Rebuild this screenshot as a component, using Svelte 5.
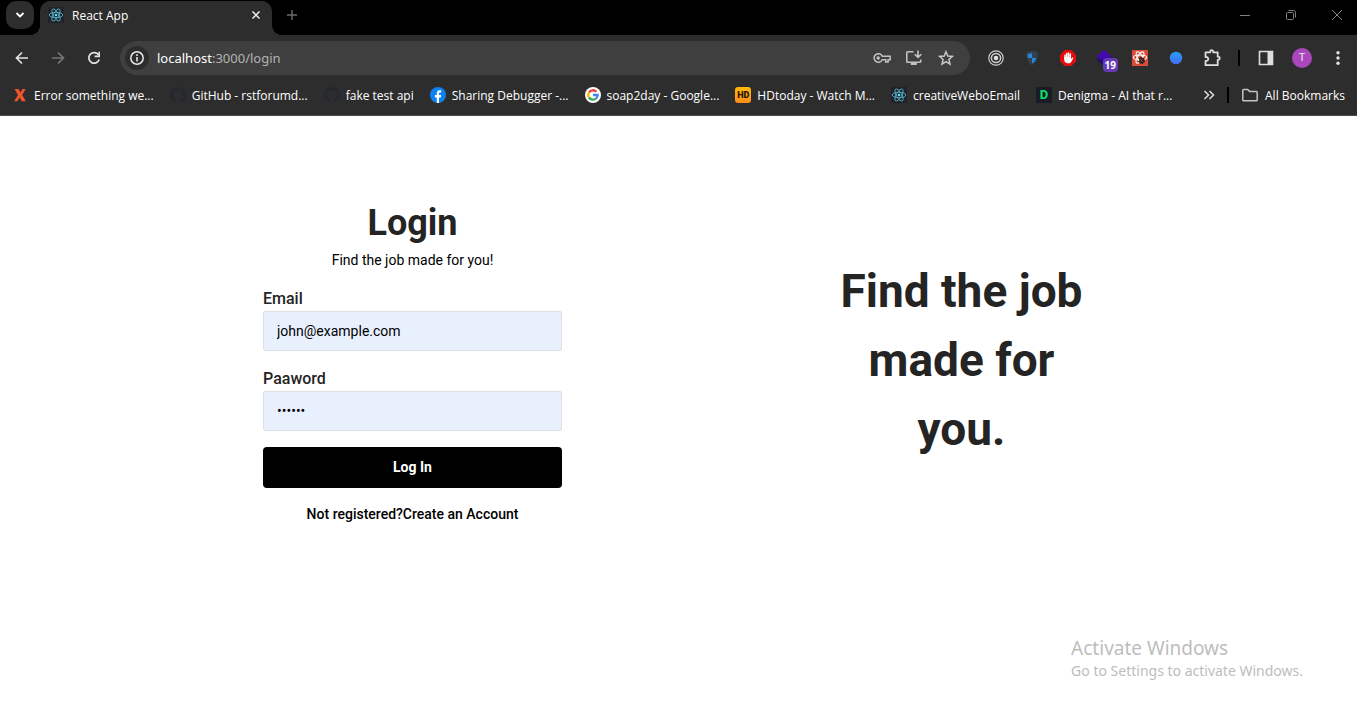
<script>
  let email = $state('john@example.com');
  let password = $state('secret');

  const bookmarks = [
    { icon: 'x', label: 'Error something we...' },
    { icon: 'github', label: 'GitHub - rstforumd...' },
    { icon: 'github', label: 'fake test api' },
    { icon: 'facebook', label: 'Sharing Debugger -...' },
    { icon: 'google', label: 'soap2day - Google...' },
    { icon: 'hd', label: 'HDtoday - Watch M...' },
    { icon: 'react', label: 'creativeWeboEmail' },
    { icon: 'denigma', label: 'Denigma - AI that r...' }
  ];
</script>

{#snippet reactLogo()}
  <svg width="16" height="16" viewBox="0 0 16 16" aria-hidden="true">
    <rect width="16" height="16" fill="#20232a" />
    <g fill="none" stroke="#58bcd6" stroke-width="0.8">
      <ellipse cx="8" cy="8" rx="6.8" ry="2.7" />
      <ellipse cx="8" cy="8" rx="6.8" ry="2.7" transform="rotate(60 8 8)" />
      <ellipse cx="8" cy="8" rx="6.8" ry="2.7" transform="rotate(120 8 8)" />
    </g>
    <circle cx="8" cy="8" r="1.3" fill="#61dafb" />
  </svg>
{/snippet}

{#snippet favicon(kind)}
  {#if kind === 'react'}
    {@render reactLogo()}
  {:else if kind === 'x'}
    <svg width="16" height="16" viewBox="0 0 16 16" aria-hidden="true">
      <path d="M2.500 2h4l2 3.600L10.400 2h3.200L10.200 8l3.600 6.200h-4L7.600 10.400 5.400 14.200H2.200L6 8z" fill="#f0562b" />
    </svg>
  {:else if kind === 'github'}
    <svg width="16" height="16" viewBox="0 0 16 16" aria-hidden="true">
      <path fill="#24292f" d="M8 0C3.580 0 0 3.580 0 8c0 3.540 2.290 6.530 5.470 7.590.4.070.55-.17.55-.38 0-.19-.01-.82-.01-1.490-2.010.37-2.530-.49-2.690-.94-.09-.23-.48-.94-.82-1.130-.28-.15-.68-.52-.01-.53.63-.01 1.080.58 1.230.82.72 1.210 1.870.87 2.330.66.070-.52.28-.87.51-1.070-1.780-.2-3.640-.89-3.640-3.950 0-.87.31-1.590.82-2.150-.08-.2-.36-1.020.08-2.120 0 0 .67-.21 2.200.82.64-.18 1.320-.27 2-.27s1.360.09 2 .27c1.530-1.040 2.200-.82 2.200-.82.44 1.100.16 1.920.08 2.120.51.56.82 1.270.82 2.150 0 3.070-1.870 3.750-3.650 3.950.29.25.54.73.54 1.480 0 1.070-.01 1.930-.01 2.200 0 .21.15.46.55.38A8.010 8.010 0 0 0 16 8c0-4.420-3.580-8-8-8z" />
    </svg>
  {:else if kind === 'facebook'}
    <svg width="16" height="16" viewBox="0 0 16 16" aria-hidden="true">
      <circle cx="8" cy="8" r="8" fill="#0c82f0" />
      <path d="M6.800 16v-5.500H4.900V8.100h1.900V6.400c0-2.200 1.100-3.200 2.900-3.200.6 0 1.100.1 1.500.2v2h-1c-.9 0-1.200.5-1.200 1.200v1.500h2.200l-.4 2.400H9V16z" fill="#fff" />
    </svg>
  {:else if kind === 'google'}
    <svg width="16" height="16" viewBox="0 0 16 16" aria-hidden="true">
      <circle cx="8" cy="8" r="8" fill="#fff" />
      <g fill="none" stroke-width="2.300">
        <path d="M4 5.500A4.700 4.700 0 0 1 11.400 4.700" stroke="#ea4335" />
        <path d="M4 5.500a4.700 4.700 0 0 0 0 5" stroke="#fbbc05" />
        <path d="M4 10.500a4.700 4.700 0 0 0 7 1" stroke="#34a853" />
        <path d="M11 11.500A4.700 4.700 0 0 0 12.700 8H8" stroke="#4285f4" />
      </g>
    </svg>
  {:else if kind === 'hd'}
    <span class="tile hd" aria-hidden="true">HD</span>
  {:else}
    <span class="tile denigma" aria-hidden="true">D</span>
  {/if}
{/snippet}

<div class="browser">
  <header class="chrome">
    <div class="tabs">
      <button class="tab-search" aria-label="Search tabs">
        <svg width="10" height="8" viewBox="0 0 10 8"><path d="M1.500 2 5 5.500 8.500 2" fill="none" stroke="#fff" stroke-width="1.800" /></svg>
      </button>
      <div class="tab">
        {@render reactLogo()}
        <span class="tab-title">React App</span>
        <button class="icon close" aria-label="Close tab">
          <svg width="10" height="10" viewBox="0 0 10 10"><path d="M1.500 1.500l7 7M8.500 1.500l-7 7" stroke="#eee" stroke-width="1.500" /></svg>
        </button>
      </div>
      <button class="icon new-tab" aria-label="New tab">
        <svg width="12" height="12" viewBox="0 0 12 12"><path d="M6 1v10M1 6h10" stroke="#6c6c6c" stroke-width="1.400" /></svg>
      </button>
      <div class="window-controls">
        <button class="icon" aria-label="Minimize"><svg width="10" height="10" viewBox="0 0 10 10"><path d="M0 5.500h10" stroke="#808080" /></svg></button>
        <button class="icon" aria-label="Restore"><svg width="10" height="10" viewBox="0 0 10 10"><rect x=".5" y="2.500" width="7" height="7" rx="1" fill="none" stroke="#808080" /><path d="M2.500.5h5a2 2 0 0 1 2 2v5" fill="none" stroke="#808080" /></svg></button>
        <button class="icon" aria-label="Close window"><svg width="10" height="10" viewBox="0 0 10 10"><path d="M0 0l10 10M10 0L0 10" stroke="#858585" /></svg></button>
      </div>
    </div>

    <div class="toolbar">
      <button class="icon" aria-label="Back"><svg width="16" height="16" viewBox="0 0 16 16"><path d="M14 8H3M8 2.500 2.500 8 8 13.500" fill="none" stroke="#e3e3e3" stroke-width="1.700" /></svg></button>
      <button class="icon" aria-label="Forward"><svg width="16" height="16" viewBox="0 0 16 16"><path d="M2 8h11M8 2.500 13.500 8 8 13.500" fill="none" stroke="#777" stroke-width="1.700" /></svg></button>
      <button class="icon" aria-label="Reload"><svg width="16" height="16" viewBox="0 0 16 16"><path d="M12.600 5A5.300 5.300 0 1 0 13.200 9.500" fill="none" stroke="#e3e3e3" stroke-width="1.700" /><path d="M14 1.800v5.400H8.600V5.600h3.800V1.800z" fill="#e3e3e3" /></svg></button>
      <div class="omnibox">
        <button class="icon site-info" aria-label="View site information">
          <svg width="16" height="16" viewBox="0 0 16 16"><circle cx="8" cy="8" r="6.200" fill="none" stroke="#e8e8e8" stroke-width="1.500" /><path d="M8 7v4.500M8 4.300v1.600" stroke="#e8e8e8" stroke-width="1.600" /></svg>
        </button>
        <a class="address" href="#login"><span>localhost</span>:3000/login</a>
        <button class="icon" aria-label="Manage passwords">
          <svg width="18" height="16" viewBox="0 0 18 16"><path d="M9.300 6.200a4.300 4.300 0 1 0 0 3.600h3.400v2.300h2.400V9.800h2.100V6.200z" fill="none" stroke="#c2c2c2" stroke-width="1.500" /><circle cx="5.200" cy="8" r="1.700" fill="#c2c2c2" /></svg>
        </button>
        <button class="icon" aria-label="Install app">
          <svg width="18" height="16" viewBox="0 0 18 16"><path d="M8.500 1.800H2.600a.8.800 0 0 0-.8.800v8.800c0 .4.400.8.800.8h12.300a.8.800 0 0 0 .8-.8V9.500M13 .5v6.300M9.700 4.200 13 7.400l3.300-3.200" fill="none" stroke="#c2c2c2" stroke-width="1.600" /><path d="M5.800 12h6v3h-6z" fill="#c2c2c2" /></svg>
        </button>
        <button class="icon" aria-label="Bookmark this page">
          <svg width="16" height="16" viewBox="0 0 16 16"><path d="M8 1.700l1.800 4.300 4.700.4-3.600 3.100 1.100 4.600L8 11.600l-4 2.500 1.100-4.600L1.500 6.400 6.200 6z" fill="none" stroke="#c8c8c8" stroke-width="1.500" /></svg>
        </button>
      </div>
      <div class="extensions">
        <button class="icon" aria-label="Recorder">
          <svg width="16" height="16" viewBox="0 0 16 16"><g fill="none" stroke="#d0d0d0"><circle cx="8" cy="8" r="7.200" stroke-width="1.200" /><circle cx="8" cy="8" r="4.600" stroke-width="1.500" /></g><circle cx="8" cy="8" r="2.300" fill="#e0e0e0" /></svg>
        </button>
        <button class="icon" aria-label="Shield">
          <svg width="16" height="16" viewBox="0 0 16 16"><path d="M8 .5c1.800 1.300 3.600 1.600 5.600 1.600.3 6-1.300 10.400-5.600 13.400C3.700 12.500 2.100 8.100 2.400 2.100 4.400 2.100 6.200 1.800 8 .5z" fill="#34414f" /><path d="M8 3v5h4.400c-.7 2.300-2.200 4.300-4.400 5.500V8H4c-.3-1.300-.4-2.600-.3-3.900C5.200 4.100 6.600 3.800 8 3z" fill="#2586dc" /></svg>
        </button>
        <button class="icon" aria-label="Ad blocker">
          <svg width="16" height="16" viewBox="0 0 16 16"><path d="M4.700 0h6.600L16 4.700v6.600L11.300 16H4.700L0 11.300V4.700z" fill="#e40d0d" /><path d="M5 9V5.300M6.700 8V3.500M8.500 8V3M10.300 8V4" stroke="#fff" stroke-width="1.500" stroke-linecap="round" /><path d="M4.300 7h6.700v2l1.200-1.300c.5-.4 1.200.1.900.7l-1.900 3.500c-.5.900-1.200 1.300-2.200 1.300H7.400c-1.800 0-3.100-1.300-3.100-3.100z" fill="#fff" /></svg>
        </button>
        <button class="icon counter" aria-label="Extension, 19 items">
          <svg width="16" height="16" viewBox="0 0 16 16"><path d="M0 10 8 5.500l8 4.500-8 5z" fill="#20106e" /><path d="M0 6l4-2.300L8 0l4 3.500L16 6l-8 5z" fill="#4508ae" /></svg>
          <span class="badge">19</span>
        </button>
        <button class="icon" aria-label="React debugger">
          <svg width="16" height="16" viewBox="0 0 16 16"><rect width="16" height="16" fill="#dc4a38" /><g fill="none" stroke="#fff" stroke-width="1.100"><ellipse cx="8" cy="7.500" rx="6.600" ry="2.500" /><ellipse cx="8" cy="7.500" rx="6.300" ry="2.500" transform="rotate(60 8 7.500)" /><ellipse cx="8" cy="7.500" rx="6.300" ry="2.500" transform="rotate(120 8 7.500)" /></g><path d="M7 8l1.500-1L10 7.500l2 .5v1l1 1-.5 3-2 1-2.500-.5-1.500-2 .8-1.200z" fill="#25201f" /><path d="M8 9l3.500 3.500M8.200 11.500l2.800-3" stroke="#dc4a38" stroke-width=".6" /></svg>
        </button>
        <button class="icon" aria-label="Blue extension">
          <svg width="16" height="16" viewBox="0 0 16 16"><defs><linearGradient id="orb" x1="0" y1="0" x2="0" y2="1"><stop stop-color="#289ff3" /><stop offset="1" stop-color="#426bf2" /></linearGradient></defs><circle cx="8" cy="8" r="6.200" fill="url(#orb)" /></svg>
        </button>
        <button class="icon" aria-label="Extensions">
          <svg width="18" height="18" viewBox="0 0 18 18"><path d="M2.500 3.300h4.700v-.6a1.500 1.500 0 0 1 3 0v.6h4.500v4.400h.4a1.600 1.600 0 0 1 0 3.200h-.4v5.300H2.500v-4.300h.8a1.900 1.900 0 0 0 0-3.900h-.8z" fill="none" stroke="#dedede" stroke-width="1.800" stroke-linejoin="round" /></svg>
        </button>
        <span class="divider"></span>
        <button class="icon" aria-label="Side panel">
          <svg width="16" height="16" viewBox="0 0 16 16"><path d="M1.500 1.500h13v13h-13z" fill="none" stroke="#dedede" stroke-width="1.600" /><path d="M9.500 1h5.500v14H9.500z" fill="#dedede" /></svg>
        </button>
        <button class="icon" aria-label="Profile"><span class="avatar">T</span></button>
        <button class="icon" aria-label="Menu">
          <svg width="16" height="16" viewBox="0 0 16 16" fill="#e3e3e3"><circle cx="8" cy="2.700" r="1.700" /><circle cx="8" cy="8" r="1.700" /><circle cx="8" cy="13.300" r="1.700" /></svg>
        </button>
      </div>
    </div>

    <nav class="bookmarks" aria-label="Bookmarks">
      {#each bookmarks as item}
        <a class="bookmark" href="#bookmark">{@render favicon(item.icon)}<span class="label">{item.label}</span></a>
      {/each}
      <div class="bookmarks-end">
        <button class="icon more" aria-label="More bookmarks">
          <svg width="12" height="10" viewBox="0 0 12 10"><path d="M1.500 1l4 4-4 4M6.500 1l4 4-4 4" fill="none" stroke="#d8d8d8" stroke-width="1.600" /></svg>
        </button>
        <span class="divider"></span>
        <a class="bookmark" href="#all">
          <svg width="18" height="16" viewBox="0 0 18 16" aria-hidden="true"><path d="M1.800 13V3.200c0-.5.300-.8.800-.8h4l2 2h6.800c.5 0 .8.300.8.800V13c0 .5-.3.800-.8.800H2.600c-.5 0-.8-.3-.8-.8z" fill="none" stroke="#c4c4c4" stroke-width="1.500" /></svg>
          <span class="label">All Bookmarks</span>
        </a>
      </div>
    </nav>
  </header>

  <main>
    <section class="column">
      <form onsubmit={(e) => e.preventDefault()}>
        <h1>Login</h1>
        <p class="lead">Find the job made for you!</p>
        <div class="field">
          <label for="email">Email</label>
          <input id="email" type="email" bind:value={email} />
        </div>
        <div class="field">
          <label for="password">Paaword</label>
          <input id="password" type="password" bind:value={password} />
        </div>
        <button class="submit" type="submit">Log In</button>
        <a class="register" href="#register">Not registered?Create an Account</a>
      </form>
    </section>
    <section class="column">
      <h2>Find the job made for you.</h2>
    </section>
  </main>

  <aside class="watermark">
    <p class="watermark-title">Activate Windows</p>
    <p>Go to Settings to activate Windows.</p>
  </aside>
</div>

<style>
  :global(body) { margin: 0; background: #fff; }
  * { box-sizing: border-box; }
  h1, h2, p { margin: 0; }
  button { border: 0; padding: 0; background: none; font: inherit; cursor: pointer; }
  a { text-decoration: none; color: inherit; }
  svg { flex: none; display: block; }

  .browser {
    position: relative;
    min-height: 100vh;
    font-family: Roboto, sans-serif;
  }
  .chrome {
    background: #2d2d2d;
    border-bottom: 1px solid #4b4b4b;
    color: #fff;
    font: 12px/16px "Open Sans", "Noto Sans", sans-serif;
  }
  .icon {
    display: flex;
    flex: none;
    align-items: center;
    justify-content: center;
    width: 28px;
    height: 28px;
  }

  .tabs {
    display: flex;
    height: 35px;
    padding-left: 6px;
    background: #000;
  }
  .tab-search {
    display: flex;
    align-items: center;
    justify-content: center;
    width: 28px;
    height: 28px;
    margin-top: 1px;
    border-radius: 10px;
    background: #2d2d2d;
  }
  .tab {
    position: relative;
    display: flex;
    align-items: center;
    gap: 8px;
    width: 232px;
    margin: 1px 0 0 6px;
    padding: 0 2px 6px 8px;
    border-radius: 10px 10px 0 0;
    background: #2d2d2d;
  }
  .tab::before, .tab::after {
    content: "";
    position: absolute;
    bottom: 0;
    width: 10px;
    height: 10px;
  }
  .tab::before { right: 100%; background: radial-gradient(circle at 0 0, transparent 10px, #2d2d2d 10px); }
  .tab::after { left: 100%; background: radial-gradient(circle at 100% 0, transparent 10px, #2d2d2d 10px); }
  .tab-title { flex: 1; }
  .tab-title, .label { padding-top: 2px; }
  .new-tab { margin: 1px 0 0 6px; }
  .window-controls { display: flex; gap: 6px; margin-left: auto; }
  .window-controls .icon { width: 40px; height: 30px; }

  .toolbar {
    display: flex;
    align-items: center;
    gap: 8px;
    height: 46px;
    padding: 0 5px 0 8px;
  }
  .omnibox {
    display: flex;
    flex: 1;
    align-items: center;
    gap: 4px;
    min-width: 0;
    height: 34px;
    margin: 0 4px;
    padding: 0 10px 0 5px;
    border-radius: 17px;
    background: #3f3f3f;
  }
  .site-info {
    width: 24px;
    height: 24px;
    border-radius: 12px;
    background: #2d2d2d;
  }
  .address {
    flex: 1;
    margin-left: 4px;
    color: #b4b4b4;
    font: 13px/20px "Noto Sans", sans-serif;
  }
  .address span { color: #fff; }
  .extensions { display: flex; align-items: center; gap: 8px; }
  .counter { position: relative; }
  .badge {
    position: absolute;
    right: 0;
    bottom: 0;
    padding: 0 2px;
    border-radius: 4px;
    background: #673ab7;
    color: #fff;
    font-size: 10px;
    font-weight: 700;
    line-height: 14px;
  }
  .divider {
    flex: none;
    width: 10px;
    height: 16px;
    background: linear-gradient(#000, #000) center / 2px 100% no-repeat;
  }
  .avatar {
    width: 20px;
    height: 20px;
    border-radius: 50%;
    background: #ab47bc;
    color: #f4e4f6;
    font: 11px/20px Roboto, sans-serif;
  }

  .bookmarks {
    display: flex;
    align-items: center;
    gap: 16px;
    height: 34px;
    padding: 0 12px 6px;
    white-space: nowrap;
  }
  .bookmark { display: flex; align-items: center; gap: 6px; }
  .bookmarks-end { display: flex; align-items: center; gap: 8px; margin-left: auto; }
  .tile {
    width: 16px;
    height: 16px;
    text-align: center;
    font: 700 9px/16px Roboto, sans-serif;
  }
  .hd { border-radius: 3px; background: linear-gradient(#ffb90b, #ff8c1b); color: #291600; font-weight: 900; }
  .denigma { background: #171c26; color: #0be36c; font-size: 13px; }
  .more { width: 12px; }

  main {
    display: flex;
    max-width: 1115px;
    margin: 0 auto;
    padding: 84px 0 0 17px;
  }
  .column {
    display: flex;
    flex: 1;
    justify-content: center;
    align-items: flex-start;
  }
  form {
    display: flex;
    flex-direction: column;
    width: 100%;
    max-width: 299px;
    color: #000;
  }
  h1 {
    color: #242424;
    font-size: 36px;
    line-height: 46px;
    text-align: center;
  }
  .lead { margin: 4px 0 17px; font-size: 14px; line-height: 20px; text-align: center; }
  .field { display: flex; flex-direction: column; margin-bottom: 16px; }
  label { color: #242424; font-size: 16px; font-weight: 500; line-height: 24px; }
  input {
    height: 40px;
    padding: 0 13px;
    border: 1px solid #dcdfe6;
    border-radius: 2px;
    background: #e8f0fe;
    color: #000;
    font: 14px/20px Roboto, sans-serif;
  }
  .submit {
    height: 41px;
    padding-bottom: 2px;
    border-radius: 4px;
    background: #000;
    color: #fff;
    font-size: 14px;
    font-weight: 700;
  }
  .register { margin-top: 16px; font-size: 14px; font-weight: 500; line-height: 20px; text-align: center; }
  h2 {
    max-width: 270px;
    margin-top: 57px;
    color: #242424;
    font-size: 46px;
    line-height: 69px;
    text-align: center;
  }

  .watermark {
    position: absolute;
    right: 54px;
    bottom: 30px;
    color: #bdbdbd;
    font: 14px/22px "Noto Sans", sans-serif;
  }
  .watermark-title { font-size: 19px; line-height: 24px; }
</style>
